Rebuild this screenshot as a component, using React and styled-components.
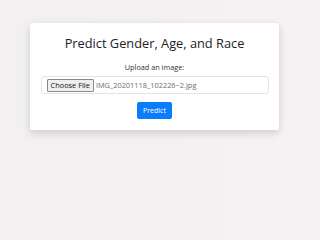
import React from "react";
import styled, { createGlobalStyle } from "styled-components";

const GlobalStyle = createGlobalStyle`
  html, body {
    margin: 0;
    padding: 0;
    background: #f4f1f2;
    font-family: "Open Sans", "Noto Sans", sans-serif;
  }
`;

const Page = styled.div`
  width: 320px;
  height: 240px;
  background: linear-gradient(90deg, #f2f0f0 0%, #f5f1f3 60%, #f7f3f5 100%);
  padding-top: 23px;
  box-sizing: border-box;
`;

const Card = styled.div`
  width: 249px;
  margin-left: 30px;
  background: #ffffff;
  border-radius: 2px;
  box-shadow: 0 3px 8px rgba(0, 0, 0, 0.16);
  padding: 11px 11px 11px;
  box-sizing: border-box;
  display: flex;
  flex-direction: column;
  align-items: center;
`;

const Title = styled.h1`
  margin: 0;
  font-size: 12.8px;
  font-weight: 500;
  color: #1e2125;
  line-height: 18px;
`;

const Label = styled.label`
  margin-top: 10px;
  font-size: 7.3px;
  color: #333;
  line-height: 10px;
`;

const FileRow = styled.div`
  margin-top: 4px;
  width: 228px;
  height: 18px;
  border: 1px solid #e2e4e6;
  border-radius: 3px;
  box-sizing: border-box;
  display: flex;
  align-items: center;
  padding-left: 5px;
  gap: 2px;
`;

const ChooseButton = styled.span`
  display: inline-flex;
  align-items: center;
  height: 13px;
  padding: 0 3px;
  border: 1px solid #8a8a8a;
  border-radius: 1px;
  background: #efefef;
  font-size: 7.4px;
  color: #111;
  box-sizing: border-box;
`;

const FileName = styled.span`
  font-size: 7.4px;
  color: #6c6c6c;
`;

const PredictButton = styled.button`
  margin-top: 8px;
  height: 17px;
  width: 35px;
  border: none;
  border-radius: 2px;
  background: #0b7dfb;
  color: #fff;
  font-family: inherit;
  font-size: 7px;
  padding: 0;
`;

export default function App() {
  return (
    <Page>
      <GlobalStyle />
      <Card>
        <Title>Predict Gender, Age, and Race</Title>
        <Label>Upload an image:</Label>
        <FileRow>
          <ChooseButton>Choose File</ChooseButton>
          <FileName>IMG_20201118_102226~2.jpg</FileName>
        </FileRow>
        <PredictButton>Predict</PredictButton>
      </Card>
    </Page>
  );
}
